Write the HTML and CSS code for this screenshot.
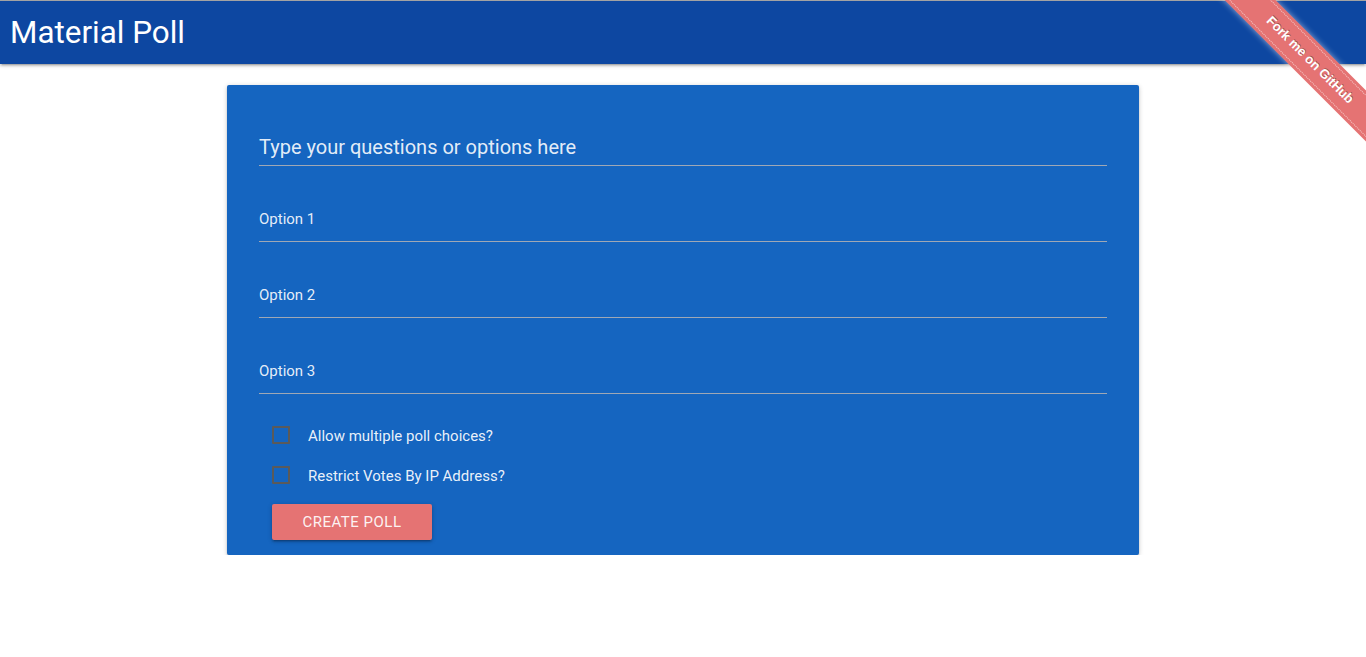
FILE: index.html
```html
<!DOCTYPE html>
<html lang="en">
<head>
<meta charset="utf-8">
<title>Material Poll</title>
<link rel="stylesheet" href="styles.css">
</head>
<body>
<header class="topbar">
  <h1 class="brand">Material Poll</h1>
</header>

<a class="fork-ribbon" href="#"><span class="fork-band"><span class="fork-text">Fork me on GitHub</span></span></a>

<main class="page">
  <form class="card">
    <div class="field field-title"><span class="placeholder">Type your questions or options here</span></div>
    <div class="field field-option"><span class="placeholder">Option 1</span></div>
    <div class="field field-option"><span class="placeholder">Option 2</span></div>
    <div class="field field-option"><span class="placeholder">Option 3</span></div>

    <div class="checks">
      <label class="check"><span class="box"></span><span class="check-label">Allow multiple poll choices?</span></label>
      <label class="check"><span class="box"></span><span class="check-label">Restrict Votes By IP Address?</span></label>
    </div>

    <div class="actions">
      <button type="button" class="btn">Create Poll</button>
    </div>
  </form>
</main>
</body>
</html>
```
FILE: styles.css
```css
* { box-sizing: border-box; }

html, body {
  margin: 0;
  padding: 0;
  background: #ffffff;
  font-family: Roboto, "Liberation Sans", Arial, sans-serif;
}

.topbar {
  height: 64px;
  border-top: 1px solid #a3a3a3;
  background: #0d47a1;
  box-shadow: 0 2px 2px 0 rgba(0,0,0,0.14), 0 3px 1px -2px rgba(0,0,0,0.12), 0 1px 5px 0 rgba(0,0,0,0.2);
  padding-left: 10px;
  position: relative;
  z-index: 1;
}

.brand {
  margin: 0;
  font-weight: 400;
  font-size: 31.4px;
  line-height: 63px;
  color: #ffffff;
}

/* ribbon */
.fork-ribbon {
  position: absolute;
  top: 0;
  right: 0;
  width: 150px;
  height: 150px;
  overflow: hidden;
  z-index: 10;
  text-decoration: none;
}

.fork-band {
  position: absolute;
  left: -16px;
  top: 42px;
  width: 220px;
  height: 36px;
  padding: 3px 0;
  background: #e57373;
  transform: rotate(45deg);
  box-shadow: 0 0 6px rgba(255,255,255,0.55);
}

.fork-text {
  display: block;
  height: 30px;
  line-height: 28px;
  border-top: 1px dotted rgba(255,255,255,0.6);
  border-bottom: 1px dotted rgba(255,255,255,0.6);
  text-align: center;
  color: #ffffff;
  font-family: "Liberation Sans", Arial, sans-serif;
  font-weight: 700;
  font-size: 13px;
  text-shadow: 0 -1px rgba(0,0,0,0.35);
}

/* page */
.page {
  padding-top: 21px;
  display: flex;
  justify-content: center;
}

.card {
  width: 912px;
  background: #1565c0;
  border-radius: 2px;
  padding: 0 32px 15px;
  box-shadow: 0 2px 2px 0 rgba(0,0,0,0.14), 0 3px 1px -2px rgba(0,0,0,0.12), 0 1px 5px 0 rgba(0,0,0,0.2);
}

.field {
  display: flex;
  align-items: flex-end;
  border-bottom: 1px solid #9fa8b5;
  color: rgba(255,255,255,0.9);
}

.field-title {
  height: 81px;
  padding-bottom: 4px;
  font-size: 20px;
  line-height: 28px;
}

.field-option {
  height: 76px;
  padding-bottom: 12px;
  font-size: 15px;
  line-height: 20px;
}

.checks {
  display: flex;
  flex-direction: column;
  gap: 20px;
  padding: 32px 0 0 13px;
}

.check {
  display: flex;
  align-items: center;
  gap: 18px;
  height: 20px;
  font-size: 15px;
  color: rgba(255,255,255,0.92);
}

.box {
  width: 18px;
  height: 18px;
  margin-bottom: 2px;
  border: 2px solid #5a5a5a;
  border-radius: 1px;
}

.actions {
  padding: 18px 0 0 13px;
}

.btn {
  width: 160px;
  height: 36px;
  border: none;
  border-radius: 2px;
  background: #e57373;
  color: rgba(255,255,255,0.92);
  font-family: Roboto, "Liberation Sans", Arial, sans-serif;
  font-size: 15px;
  text-transform: uppercase;
  letter-spacing: 0.5px;
  box-shadow: 0 2px 2px 0 rgba(0,0,0,0.14), 0 3px 1px -2px rgba(0,0,0,0.12), 0 1px 5px 0 rgba(0,0,0,0.2);
  cursor: pointer;
}
```
